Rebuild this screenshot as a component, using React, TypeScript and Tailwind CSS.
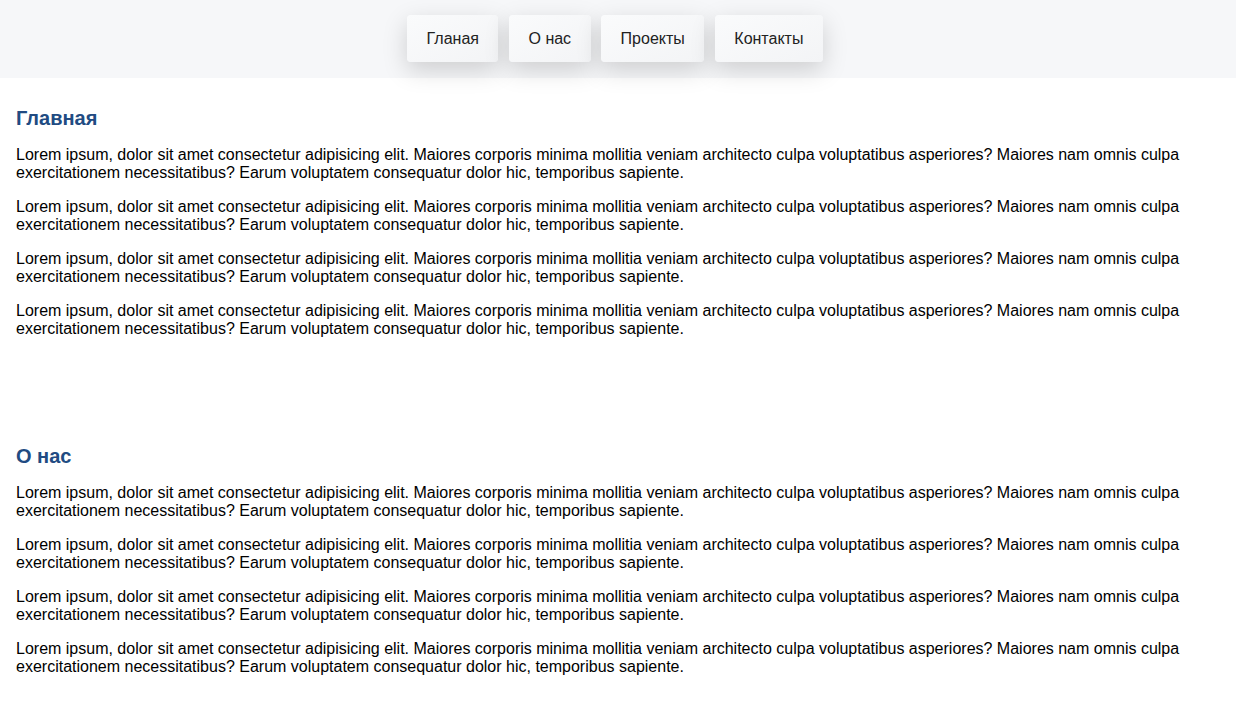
import React from "react";

const LOREM =
  "Lorem ipsum, dolor sit amet consectetur adipisicing elit. Maiores corporis minima mollitia veniam architecto culpa voluptatibus asperiores? Maiores nam omnis culpa exercitationem necessitatibus? Earum voluptatem consequatur dolor hic, temporibus sapiente.";

const NAV = ["Гланая", "О нас", "Проекты", "Контакты"];

function Section({ title }: { title: string }) {
  return (
    <section className="px-4 pt-[29px] pb-[78px]">
      <h2 className="text-[20px] leading-[23px] font-bold text-[#214b82] mb-[16px]">{title}</h2>
      <div className="flex flex-col gap-[16px]">
        {[0, 1, 2, 3].map((i) => (
          <p key={i} className="text-[16px] leading-[18px] text-black">
            {LOREM}
          </p>
        ))}
      </div>
    </section>
  );
}

export default function App() {
  return (
    <div className="min-h-screen bg-white" style={{ fontFamily: '"Liberation Sans", Arial, sans-serif' }}>
      <header className="h-[78px] bg-[#f6f7f9] flex items-start justify-center pt-[15px] pr-[6px] gap-[10.5px]">
        {NAV.map((n) => (
          <button
            key={n}
            className="h-[47px] px-[19.5px] rounded-[4px] bg-gradient-to-br from-[#fafbfc] to-[#f3f4f6] text-[16px] text-[#222] shadow-[0_8px_24px_rgba(0,0,0,0.17)]"
          >
            {n}
          </button>
        ))}
      </header>
      <main>
        <Section title="Главная" />
        <Section title="О нас" />
      </main>
    </div>
  );
}
